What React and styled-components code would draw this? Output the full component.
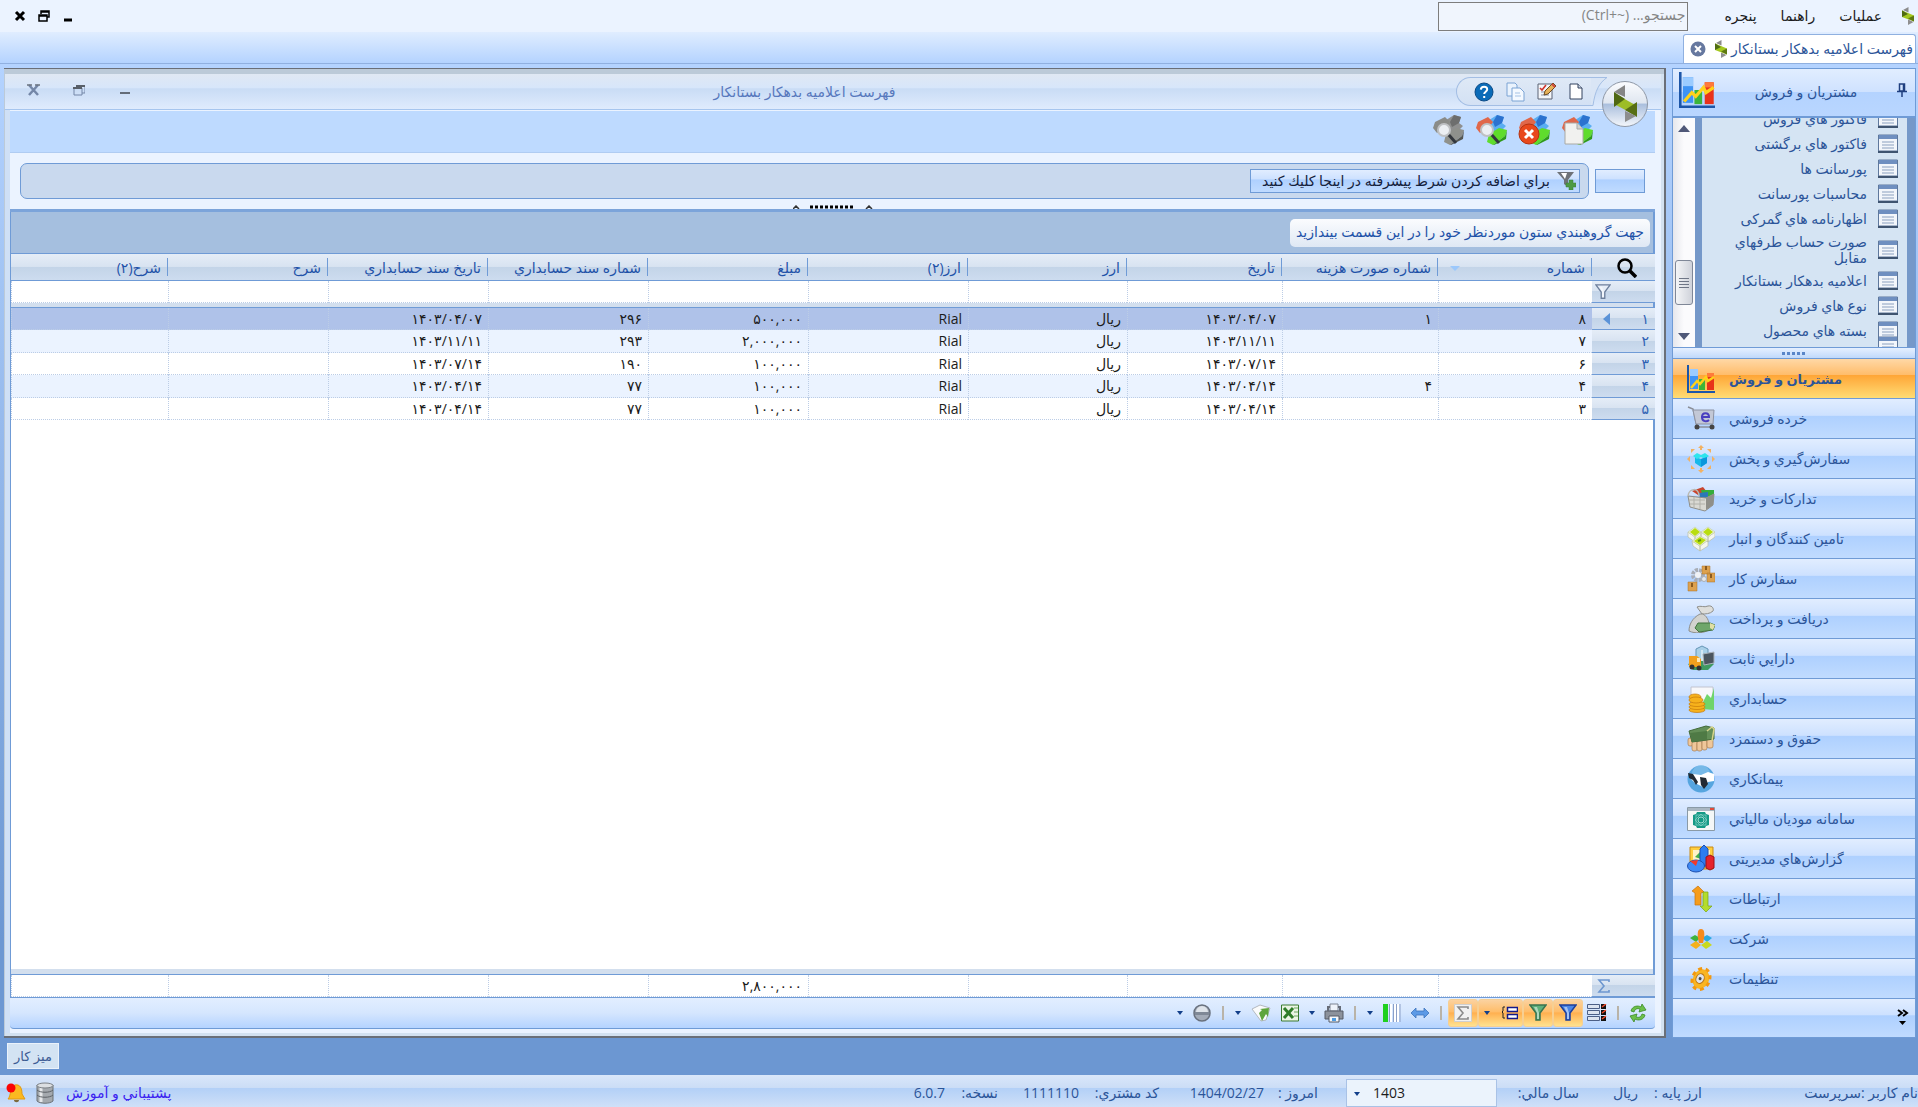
import React from "react";
import styled, { createGlobalStyle, css } from "styled-components";

const uiFont = `"Open Sans", "DejaVu Sans", sans-serif`;
const line = "#6f9bd6";
const ink = "#2c5599";

const glass = css`
  background: linear-gradient(#e1edff 0, #cde1ff 42%, #aed0ff 44%, #c0dbff 100%);
`;
const headerShade = css`
  background: linear-gradient(#e5edf7 0, #d8e3f1 48%, #c3d4e8 50%, #cddcef 100%);
`;
const dotted = "#bccde6";

const GlobalStyle = createGlobalStyle`
  * { box-sizing: border-box; }
  html, body, #root { height: 100%; }
  body { margin: 0; font: 14px/18px ${uiFont}; color: ${ink}; overflow: hidden; }
  button, input, select { font: inherit; color: inherit; margin: 0; padding: 0; border: 0; background: none; border-radius: 0; outline: 0; }
  button { cursor: pointer; white-space: nowrap; }
  svg { display: block; flex: none; }
  a { text-decoration: none; }
`;

/* ---------- shell ---------- */
const Shell = styled.div`
  display: flex;
  flex-direction: column;
  height: 100vh;
`;
const MenuBar = styled.header`
  display: flex;
  justify-content: space-between;
  height: 32px;
  background: #ebf3ff;
`;
const SystemButtons = styled.div`
  display: flex;
  align-items: center;
  padding-left: 8px;
`;
const SystemButton = styled.button`
  display: grid;
  place-items: center;
  width: 24px;
  height: 28px;
`;
const MenuSide = styled.nav`
  display: flex;
  direction: rtl;
  align-items: center;
  padding-right: 4px;
`;
const MenuItem = styled.button`
  margin-right: ${(p) => p.$gap || 24}px;
  color: #1c1c1c;
`;
const SearchBox = styled.input`
  && {
    width: 250px;
    height: 29px;
    margin-right: 36px;
    border: 1px solid #7d7d7d;
    background: #f0f5fd;
    padding: 0 2px 4px;
  }
  &::placeholder { color: #858585; opacity: 1; }
`;
const TabStrip = styled.div`
  display: flex;
  direction: rtl;
  align-items: flex-end;
  height: 32px;
  padding-right: 2px;
  border-bottom: 1px solid #90b0e0;
  background: linear-gradient(#e0edff, #b4d3ff);
`;
const Tab = styled.div`
  display: flex;
  align-items: center;
  gap: 4px;
  width: 233px;
  height: 29px;
  padding: 0 2px;
  border: 1px solid #8fb0e0;
  border-bottom: 0;
  border-radius: 3px 3px 0 0;
  background: #fff;
  white-space: nowrap;
`;
const TabClose = styled.button`
  && {
    margin-right: auto;
    padding: 0 4px;
  }
`;
const Workspace = styled.main`
  display: flex;
  flex: 1;
  min-height: 0;
  gap: 6px;
  padding: 4px 2px 0 4px;
  background: linear-gradient(#b4d3ff 0, #6c97d2 90%);
`;

/* ---------- document window ---------- */
const DocWindow = styled.section`
  position: relative;
  display: flex;
  flex: 1;
  flex-direction: column;
  min-width: 0;
  border: solid #6a6f78;
  border-width: 1px 2px 2px 0;
  background: #d3e1f0;
  padding: 5px 3px 3px 1px;
  box-shadow: inset 1px 5px 0 #bccad8;
`;
const TitleBar = styled.div`
  display: flex;
  height: 36px;
  flex: none;
  border-bottom: 1px solid #a6c5ee;
  background: linear-gradient(#e0e8f3 0, #d7e6fa 40%, #c9dcf5 42%, #dfebfd 100%);
`;
const WindowButtons = styled.div`
  display: flex;
  padding: 0 5px;
`;
const WindowButton = styled.button`
  display: grid;
  place-items: center;
  width: 46px;
  height: 32px;
`;
const WindowTitle = styled.h1`
  flex: 1;
  margin: 0;
  text-align: center;
  font: 400 14px/36px ${uiFont};
  color: #5778bd;
`;
const QuickTools = styled.div`
  display: flex;
  direction: rtl;
  align-items: center;
  align-self: flex-start;
  gap: 12px;
  height: 29px;
  margin: 3px 0 0;
  padding: 0 8px 0 17px;
  border: 1px solid #a3bee4;
  border-right: 0;
  border-radius: 15px 0 0 15px;
  background: linear-gradient(#dfe9f6, #d3e1f4);
`;
const QuickEnd = styled.svg`
  margin: 3px 54px 0 0;
`;
const Orb = styled.button`
  position: absolute;
  top: 11px;
  right: 15px;
`;
const WindowBody = styled.div`
  display: flex;
  flex: 1;
  flex-direction: column;
  min-height: 0;
  padding: 1px 6px 4px 5px;
  background: #ebf3ff;
  box-shadow: inset 5px 0 0 #cfe0f6;
`;
const ActionBar = styled.div`
  display: flex;
  direction: rtl;
  align-items: flex-start;
  gap: 11px;
  height: 42px;
  flex: none;
  padding: 3px 62px 0 0;
  border-bottom: 1px solid #b0ccf2;
  background: #bedaff;
`;
const ConditionRow = styled.div`
  display: flex;
  direction: rtl;
  gap: 6px;
  align-items: center;
  flex: none;
  height: 55px;
  padding: 0 10px;
`;
const BlankButton = styled.button`
  && { border: 1px solid ${line}; }
  width: 50px;
  height: 24px;
  ${glass}
`;
const ConditionBox = styled.div`
  display: flex;
  align-items: center;
  flex: 1;
  height: 36px;
  padding: 0 8px;
  border: 1px solid ${line};
  border-radius: 7px;
  background: #c9d9ee;
`;
const ConditionButton = styled.button`
  && {
    display: flex;
    align-items: center;
    gap: 6px;
    height: 24px;
    width: 330px;
    padding: 0 3px;
    border: 1px solid ${line};
    color: #14213c;
    ${glass}
  }
`;
const Splitter = styled.div`
  display: flex;
  justify-content: center;
  align-items: flex-end;
  flex: none;
  height: 4px;
  border-bottom: 3px solid #7ca4da;
`;

/* ---------- grid ---------- */
const GridFrame = styled.div`
  display: flex;
  flex: 1;
  flex-direction: column;
  min-height: 0;
  border: solid ${line};
  border-width: 0 2px 1px 1px;
  background: #fff;
`;
const GroupPanel = styled.div`
  display: flex;
  direction: rtl;
  align-items: center;
  flex: none;
  height: 42px;
  padding: 0 3px;
  border-bottom: 1px solid ${line};
  background: #a5bfdf;
`;
const GroupHint = styled.span`
  height: 28px;
  padding: 0 6px;
  border-radius: 5px;
  background: linear-gradient(#fbfcfe, #dfe8f4);
  line-height: 26px;
  white-space: nowrap;
  color: #1f52a8;
`;
const Table = styled.table`
  width: 100%;
  table-layout: fixed;
  border-collapse: separate;
  border-spacing: 0;
  direction: rtl;
`;
const HeadCell = styled.th`
  height: 27px;
  padding: 0;
  border-bottom: 1px solid ${line};
  ${headerShade}
  font-weight: 400;
  color: #1f52a8;
`;
const HeadLabel = styled.div`
  display: flex;
  align-items: center;
  justify-content: ${(p) => (p.$center ? "center" : "space-between")};
  height: 18px;
  padding: 2px 6px 0 12px;
  border-right: ${(p) => (p.$center ? 0 : 1)}px solid ${line};
  white-space: nowrap;
`;
const RowHead = styled.th`
  padding: 0 6px 0 0;
  border-bottom: 1px solid ${line};
  ${headerShade}
  font-weight: 400;
  color: #2f62b4;
`;
const RowHeadInner = styled.div`
  display: flex;
  align-items: center;
  justify-content: ${(p) => (p.$end ? "flex-end" : "space-between")};
  padding-left: ${(p) => (p.$end ? 3 : 11)}px;
`;
const Cell = styled.td`
  padding: 0 6px;
  overflow: hidden;
  border-left: 1px dotted ${dotted};
  border-bottom: 1px dotted ${dotted};
  text-align: right;
  white-space: nowrap;
  color: #1b1b1b;
`;
const DataRow = styled.tr`
  height: 22px;
  background: ${(p) => (p.$selected ? "#afc2e9" : "#fff")};
  &:nth-child(even) { height: 23px; background: #ebf3ff; }
`;
const FilterRow = styled.tr`
  height: 22px;
`;
const FilterInput = styled.input`
  display: block;
  width: 100%;
  height: 18px;
`;
const Divider = styled.div`
  flex: none;
  height: 5px;
  background: #d3dfee;
  border-bottom: 1px solid ${line};
`;
const EmptyArea = styled.div`
  flex: 1;
  border-bottom: 5px solid #d3dfee;
`;
const SummaryTable = styled(Table)`
  flex: none;
  border-top: 1px solid ${line};
`;
const GridTools = styled.div`
  display: flex;
  direction: rtl;
  align-items: center;
  flex: none;
  height: 31px;
  padding-right: 4px;
  border-bottom: 1px solid ${line};
  border-radius: 0 0 4px 4px;
  background: linear-gradient(#e2eeff 0, #d5e6fe 50%, #b4d3ff 100%);
`;
const Tool = styled.button`
  && {
    display: flex;
    align-items: center;
    justify-content: center;
    gap: 12px;
    width: ${(p) => p.$w || 28}px;
    height: 28px;
    ${(p) => p.$on && css`
      border: 1px solid #f6cf93;
      border-radius: 3px;
      background: linear-gradient(#fbd2a0 0, #ffbd69 45%, #ffb050 50%, #ffe28f 100%);
    `}
  }
`;
const ToolGap = styled.span`
  width: 14px;
  height: 14px;
  background: linear-gradient(90deg, transparent 6px, #b9b3a8 6px, #b9b3a8 8px, transparent 8px);
`;

/* ---------- sidebar ---------- */
const Sidebar = styled.aside`
  display: flex;
  flex: none;
  flex-direction: column;
  width: 244px;
  border: 1px solid ${line};
  background: #7598c9;
`;
const PaneHeader = styled.div`
  display: flex;
  align-items: flex-start;
  flex: none;
  height: 49px;
  padding: 3px 8px 0 6px;
  border-bottom: 2px solid ${line};
  background: linear-gradient(#e1edff 0, #cfe2ff 48%, #b4d3ff 50%, #b9d6ff 100%);
`;
const PaneTitle = styled.h2`
  flex: 1;
  margin: 0;
  text-align: center;
  font: 400 14px/40px ${uiFont};
`;
const PinButton = styled.button`
  height: 36px;
`;
const PaneBody = styled.div`
  display: flex;
  flex: 1;
  gap: 7px;
  min-height: 0;
  padding: 0 8px 0 0;
`;
const ScrollBar = styled.div`
  display: flex;
  flex-direction: column;
  align-items: center;
  justify-content: space-between;
  flex: none;
  width: 22px;
  padding: 7px 0;
  background: linear-gradient(90deg, #e6e7ec, #fbfbfd 50%);
`;
const Thumb = styled.div`
  display: flex;
  flex-direction: column;
  align-items: center;
  justify-content: center;
  gap: 2px;
  width: 18px;
  height: 45px;
  margin-top: 100px;
  border: 1px solid #7f8797;
  border-radius: 3px;
  background: linear-gradient(90deg, #f4f5f7, #cfd2da);
`;
const Grip = styled.i`
  width: 10px;
  height: 1px;
  background: #6f7686;
`;
const LinkPane = styled.ul`
  display: flex;
  flex: 1;
  flex-direction: column;
  justify-content: flex-end;
  direction: rtl;
  margin: 0;
  padding: 0 9px 0 0;
  overflow: hidden;
  list-style: none;
  background: #d5e4f3;
`;
const LinkRow = styled.li`
  flex: none;
  height: ${(p) => (p.$tall ? 37 : 25)}px;
  &:last-child { height: 4px; }
`;
const PaneLink = styled.a`
  display: flex;
  align-items: center;
  gap: 11px;
  height: 100%;
  color: ${ink};
  line-height: 16px;
  & > span { width: 146px; }
`;
const PaneSplit = styled.div`
  display: flex;
  align-items: center;
  justify-content: center;
  flex: none;
  height: 11px;
  border-top: 1px solid ${line};
  background: linear-gradient(#e6f0ff, #c0d9fb);
`;
const NavButton = styled.button`
  && {
    display: flex;
    align-items: center;
    gap: 14px;
    flex: none;
    height: 40px;
    padding: 0 14px;
    border-top: 1px solid ${line};
    ${glass}
    ${(p) => p.$active && css`
      font-weight: 700;
      font-size: 13px;
      background: linear-gradient(#ffd8a6 0, #ffbd6c 40%, #ffa637 42%, #ffdc74 100%);
    `}
  }
`;
const NavOverflow = styled.div`
  display: flex;
  justify-content: flex-end;
  align-items: center;
  flex: none;
  height: 39px;
  padding: 0 6px;
  border-top: 1px solid ${line};
  ${glass}
`;

/* ---------- bottom ---------- */
const DeskBar = styled.div`
  flex: none;
  height: 37px;
  padding: 5px 7px;
  background: #6c97d2;
`;
const DeskButton = styled.button`
  && {
    width: 52px;
    height: 26px;
    border: 1px solid #eaf2fb;
    background: #d3e3f3;
    color: #3c5c93;
    font-size: 13px;
  }
`;
const StatusBar = styled.footer`
  display: flex;
  direction: rtl;
  align-items: center;
  flex: none;
  height: 32px;
  padding-top: 4px;
  background: linear-gradient(#dae7fa 0, #cbddf6 40%, #b3d0f7 42%, #cfe0f8 100%);
  white-space: nowrap;
`;
const Field = styled.span`
  flex: 0 0 ${(p) => p.$w}px;
`;
const YearBox = styled.span`
  position: relative;
  width: 151px;
  margin-left: 28px;
  & > svg { position: absolute; left: 8px; top: 13px; }
`;
const YearSelect = styled.select`
  && {
    display: block;
    width: 100%;
    height: 28px;
    padding-left: 26px;
    border: 1px solid #a9c2e6;
    background: #ebf3fc;
    direction: ltr;
    appearance: none;
    color: #1b1b1b;
  }
`;
const SupportArea = styled.div`
  display: flex;
  align-items: center;
  gap: 10px;
  margin-right: auto;
  padding-left: 6px;
`;
const SupportLink = styled.a`
  margin-left: 2px;
  color: #3a22f0;
`;

/* ---------- icons ---------- */
const Caret = ({ c = "#123f8a" }) => (
  <svg width="6" height="4"><path d="M0 0h6L3 4z" fill={c} /></svg>
);
const Logo = ({ s = 12 }) => (
  <svg width={s} height={s * 1.5} viewBox="0 0 24 36">
    <path d="M2 6 13 0v11z" fill="#8b8b8b" />
    <path d="M0 7v13l13-6z" fill="#4f6b12" />
    <path d="M0 7 24 17v12L0 20z" fill="#a4c81f" />
    <path d="M0 7v13l12-6z" fill="#4f6b12" />
    <path d="M24 17v12l-12-6z" fill="#5d7812" />
    <path d="M12 25v11l11-6z" fill="#8f8f8f" />
  </svg>
);
const OrbIcon = () => (
  <svg width="48" height="48" viewBox="0 0 48 48">
    <defs>
      <linearGradient id="orb" x1="0" y1="0" x2="0" y2="1">
        <stop offset="0" stopColor="#fbfcfe" /><stop offset=".48" stopColor="#dfe6f0" />
        <stop offset=".5" stopColor="#a9bedd" /><stop offset="1" stopColor="#f4f7fb" />
      </linearGradient>
    </defs>
    <circle cx="24" cy="24" r="22.5" fill="url(#orb)" stroke="#8f98a6" />
    <path d="M13 12 24 5v12z" fill="#858585" />
    <path d="M13 13 36 26v10L13 24z" fill="#9dbd26" />
    <path d="M13 12v15l11-8z" fill="#4f6812" />
    <path d="M36 22v15l-12-7z" fill="#586f14" />
    <path d="M24 31v11l11-6z" fill="#8d8d8d" />
  </svg>
);
const PageIcon = () => (
  <svg width="14" height="18"><path d="M1 1h8l4 4v11H1z" fill="#fff" stroke="#33425e" /><path d="M9 1v4h4" fill="#cdd6e4" stroke="#33425e" /></svg>
);
const EditIcon = () => (
  <svg width="20" height="19"><path d="M1 2h14v15H1z" fill="#f4f6fa" stroke="#5a6275" /><path d="M4 10h8M4 13h8" stroke="#8993a8" /><path d="m3 6 2 2 4-5" fill="none" stroke="#d0342c" strokeWidth="1.6" /><path d="m7 13 1-4 8-8 3 3-8 8z" fill="#e7b25a" stroke="#6b4a22" /><path d="m15 2 3 3" stroke="#d04a3e" strokeWidth="2" /></svg>
);
const CopyIcon = () => (
  <svg width="19" height="20"><path d="M1 1h8l2 2v11H1z" fill="#eaf3fd" stroke="#7ba3d4" /><path d="M6 6h8l4 4v9H6z" fill="#f4f9ff" stroke="#7ba3d4" /><path d="M9 11h5M9 14h6" stroke="#a5c2e4" /></svg>
);
const HelpIcon = () => (
  <svg width="20" height="20"><circle cx="10" cy="10" r="9" fill="#0a6bb8" stroke="#0a4a86" /><path d="M6.800 7.600c.2-4 6.600-3.800 6.400-.2-.1 2.400-3 2.200-3 4.600M10.200 14v2" fill="none" stroke="#fff" strokeWidth="2" /></svg>
);
const Blocks = ({ gray, kind }) => {
  const c = gray ? ["#8f9090", "#6d6e6e", "#8a8b88", "#8f918c", "#565752"] : ["#5aaef2", "#2c72cf", "#e0674a", "#5fdc2c", "#2f9a18"];
  return (
    <svg width="32" height="32" viewBox="0 0 32 32">
      <path d="M11 8 22 1l7 2-2 6 4 3-6 6H15z" fill={c[0]} />
      <path d="M22 1l7 2-2 6-7 4-2-5z" fill={c[1]} />
      <path d="M1 14 3 8l10-5 5 5-5 7-8 4z" fill={c[2]} />
      <path d="m14 20 10-6 8 2-2 6-12 9-6-3z" fill={c[3]} />
      <path d="m18 31 12-9 2-6-1 9-12 6z" fill={c[4]} />
      {kind === "new" && <path d="M4 9h12l6 6v15H4z" fill="#f1f1ef" stroke="#a9a9a4" />}
      {kind === "new" && <path d="M16 9v6h6" fill="#d5d5d2" stroke="#a9a9a4" />}
      {kind === "delete" && <g><circle cx="11" cy="20" r="10" fill="#e8481c" stroke="#b53210" /><path d="m7 16 8 8m0-8-8 8" stroke="#fff" strokeWidth="3" /></g>}
      {kind === "view" && <g><path d="m16 20 8 9" stroke="#33373d" strokeWidth="3" /><circle cx="12" cy="16" r="6" fill="#eceff3" stroke="#bfc1c4" strokeWidth="2" /></g>}
    </svg>
  );
};
const Funnel = ({ a = "#4b5566", b = "#e8ebf0", s = 18 }) => (
  <svg width={s} height={s} viewBox="0 0 18 18"><path d="M1 1h16l-6 8v7H7V9z" fill={b} stroke={a} strokeWidth="1.5" /><path d="M5 3h3l2 6v6H8V9z" fill="#fff" opacity=".5" /></svg>
);
const FunnelAdd = () => (
  <svg width="20" height="19" viewBox="0 0 20 19"><path d="M1 1h17l-6 8v7l-4-3V9z" fill="#6e7278" /><path d="M5 2h6l-2 6z" fill="#fff" /><path d="M13 9h4v3h3v4h-3v3h-4v-3h-3v-4h3z" fill="#4d9a45" stroke="#3a7d34" strokeWidth=".5" /></svg>
);
const ListIcon = () => (
  <svg width="20" height="19"><path d="M.5 1h19v16H.5z" fill="#f3f6fb" stroke="#5f789c" /><path d="M1 1h18v4H1z" fill="#6f8fc0" /><path d="M4 8h12M4 11h12M4 14h12" stroke="#8ba0bf" /><path d="M0 18h20" stroke="#3f5470" strokeWidth="2" /></svg>
);
const Search = () => (
  <svg width="20" height="20" viewBox="0 0 20 20"><circle cx="8" cy="8" r="6.500" fill="none" stroke="#000" strokeWidth="2.500" /><path d="m13 13 6 6" stroke="#000" strokeWidth="3.500" /></svg>
);
const Frame = ({ children }) => <svg width="28" height="28" viewBox="0 0 28 28">{children}</svg>;
const ChartIcon = ({ s = 28 }) => (
  <svg width={s} height={s} viewBox="0 0 28 28">
    <path d="M3 4h8v20H3z" fill="#3f93f4" /><path d="M3 4h8v7H3z" fill="#9bcbff" />
    <path d="M12 14h6v11h-6z" fill="#3cb53a" /><path d="M20 8h7v17h-7z" fill="#e8321a" /><path d="M20 8h7v4h-7z" fill="#ff7a3a" />
    <path d="M1 0v27h27" fill="none" stroke="#1d56a8" strokeWidth="2" />
    <path d="m4 23 6-7 3 3 6-7 2 4 6-4" fill="none" stroke="#ffd21a" strokeWidth="2.500" />
  </svg>
);
const CartIcon = () => <Frame><path d="M1 2l5 2 4 18h16" fill="none" stroke="#8b8f98" strokeWidth="1.500" /><path d="M6 5h21l-1 14H9z" fill="#c3c8d6" stroke="#8d93a3" /><path d="M14 12h8c0-5-7-5-7 0s5 5 7 3" fill="none" stroke="#4a3fc0" strokeWidth="2" /><circle cx="10" cy="22" r="2.500" fill="#444" /><circle cx="25" cy="22" r="2.500" fill="#444" /></Frame>;
const SpreadIcon = () => <Frame><g fill="#f2b263"><path d="M14 0l3 3h-6zM13 3h2v2h-2zM14 28l3-3h-6zM13 23h2v2h-2zM0 14l3-3v6zM28 14l-3-3v6zM4 4h4L4 8zM24 4v4l-4-4zM4 24v-4l4 4zM24 24h-4l4-4z" /></g><path d="m8 12 6 2 6-2v6l-6 4-6-4z" fill="#16b8ea" /><path d="m6 11 4-3 4 2 4-2 4 3-4 3-4-2-4 2z" fill="#2fe4ee" /><path d="M14 14v8l6-4v-6z" fill="#0a97dd" /></Frame>;
const BasketIcon = () => <Frame><path d="M5 6 16 2l4 5-9 3z" fill="#c8452e" /><path d="M14 5h13v7l-11 1z" fill="#35ad3b" /><path d="m12 8 9-1v5l-8 2z" fill="#2b77b8" /><path d="M1 11l18 2 8-4-1 11-8 6L3 22z" fill="#d9d9d3" stroke="#8e8e88" /><path d="M19 13v12l7-5 1-11z" fill="#8f8f89" /><path d="M2 15h16M3 19h15M7 12v11M13 13v11" stroke="#b1b1aa" /><path d="M1 11C2 3 12 2 12 11" fill="none" stroke="#b9b9b3" strokeWidth="1.500" /></Frame>;
const PalletIcon = () => <Frame><path d="m1 7 7 5v5l-7-5zM14 7l-6 5v5l6-5zM14 7l7 5v5l-7-5zM28 7l-7 5v5l7-5zM5 16l8 5v5l-7-5zM21 15l-8 6v5l8-5z" fill="#f4f5ee" stroke="#b7bda8" strokeWidth=".7" /><path d="m1 7 7-5 6 5-6 5zM14 7l7-5 7 5-7 5zM5 16l8-5 8 4-8 6z" fill="#eff4da" stroke="#c5ceaa" strokeWidth=".7" /><path d="m3 7 5-4 5 4-5 4zM16 7l5-4 5 4-5 4zM7 16l6-4 6 3-6 5z" fill="#b9dd10" /><path d="m11 16 3-1" stroke="#5f9410" strokeWidth="2" /></Frame>;
const GearBoxesIcon = () => <Frame><circle cx="11" cy="10" r="5" fill="none" stroke="#a9adb5" strokeWidth="4" strokeDasharray="3 1" /><circle cx="11" cy="10" r="3" fill="#f0f2f5" /><path d="M15 1h8v8h-8zM20 8h8v9h-8zM1 17h9v9H1z" fill="#dda14e" stroke="#a8732b" strokeWidth=".5" /><path d="M18 1h2v4h-2zM23 9h2v4h-2zM4 18h2v4H4z" fill="#8a5a1f" /><circle cx="17" cy="14" r="2.500" fill="#e5e8ec" stroke="#a9adb5" /></Frame>;
const MoneyBagIcon = () => <Frame><path d="M10 2c4-2 7 1 11-1 5-1 6 4 5 5-3 3-8 3-11 3z" fill="#dededb" stroke="#8e8e8a" /><path d="M13 9C5 13 2 20 2 26c6 3 15 2 20-1 1-7-1-13-6-16z" fill="#d2d2ce" stroke="#8e8e8a" /><path d="M11 18l12 0 5 2-2 5-14 2-4-4z" fill="#6fa66a" stroke="#43733f" /><path d="m23 18 5 2-2 5-3-2z" fill="#e0dfa4" /></Frame>;
const AssetsIcon = () => <Frame><path d="m9 4 6-3 6 3v16H9z" fill="#a9d0e8" stroke="#6595b5" /><path d="M15 5v15" stroke="#fff" /><path d="M1 19c8-4 20-4 26 0l-6 6H6z" fill="#3f9a61" /><path d="M2 11h8l4 3v8H2z" fill="#f2a01e" /><path d="M10 13h3v4h-3z" fill="#fde7b4" /><circle cx="5" cy="22" r="2.500" fill="#333" /><circle cx="12" cy="23" r="2.500" fill="#333" /><path d="m16 9 11-2v11l-10 2z" fill="#4b555f" stroke="#aab2ba" /></Frame>;
const AccountingIcon = () => <Frame><path d="M4 2h22v19H4z" fill="#f7f7fa" stroke="#c2c4cf" /><path d="M14 21 20 9l4 4 3-10v22l-11-1z" fill="#6fd46a" /><g fill="#f7b21c" stroke="#c47a0a" strokeWidth=".7"><ellipse cx="8" cy="12" rx="6" ry="3" /><ellipse cx="10" cy="25" rx="8" ry="2.500" /><ellipse cx="10" cy="22" rx="8" ry="2.500" /><ellipse cx="10" cy="19" rx="8" ry="2.500" /><ellipse cx="9" cy="15" rx="7" ry="3" /></g></Frame>;
const PayrollIcon = () => <Frame><g fill="#efc79a" stroke="#a97d4e" strokeWidth=".7"><rect x="1" y="13" width="5" height="8" rx="2" /><rect x="5" y="15" width="5" height="11" rx="2" /><rect x="10" y="16" width="5" height="10" rx="2" /><rect x="15" y="15" width="5" height="10" rx="2" /><rect x="20" y="12" width="6" height="11" rx="2" /></g><path d="M2 6 19 1l8 2v11L5 17z" fill="#648f58" stroke="#436b39" /><path d="m3 8 17-2v9L5 17z" fill="#4f7a45" /><path d="m20 6 5-4 2 2-2 12" fill="none" stroke="#d7d489" strokeWidth="1.500" /></Frame>;
const HandshakeIcon = () => <Frame><circle cx="14" cy="14" r="13.500" fill="#56a5df" /><circle cx="14" cy="9" r="9" fill="#8cc7ef" opacity=".6" /><path d="m6 9 8 1 7-3 6 2v7l-6 1-5 5-8-4-4-4z" fill="#fff" /><path d="m1 8 5 1 5 8-2 3-3-5-4-2zM13 12l6 1 2 6-4 5-3-4z" fill="#222b33" /></Frame>;
const TaxIcon = () => <Frame><path d="M.5 2.500h27v23H.5z" fill="#f4f7f7" stroke="#8a9aa6" /><path d="M1 3h26v3H1z" fill="#aab7c2" /><path d="M23 3h4v2h-4z" fill="#e04a3a" /><path d="M10 7h8l1 2 3 1v10l-3 1-1 2h-8l-1-2-3-1V10l3-1z" fill="#149a86" /><path d="M9 10h10v10H9zM14 9l6 6-6 6-6-6z" fill="none" stroke="#7fcfc2" strokeWidth=".8" /><circle cx="14" cy="15" r="3" fill="#149a86" stroke="#bfe8e0" strokeWidth=".8" /></Frame>;
const ReportIcon = () => <Frame><path d="M3 2h23v22H3z" fill="#ffcf3f" stroke="#c98a14" /><path d="M6 5h17v16H6z" fill="#fff3c6" /><path d="m8 12 6-6v8z" fill="#44b04a" /><path d="m13 4 4-4 4 4v17h-8z" fill="#2d7df0" stroke="#1a4fb5" /><path d="m19 12 4-2 4 2v11l-4 2-4-2z" fill="#e5232b" stroke="#9e1118" /><ellipse cx="9" cy="21" rx="8.500" ry="6" fill="#3e8af5" stroke="#1c4fb0" /><path d="M9 21 3 16l8-1z" fill="#f23a2a" /></Frame>;
const LinksIcon = () => <Frame><path d="M5 6l6-5 6 6-3 1v12H8V8z" fill="#f59c1c" stroke="#c8720a" strokeWidth=".7" /><path d="M16 7h5v14h4l-6 6-6-6h3z" fill="#b4dc2c" stroke="#7aa514" strokeWidth=".7" /></Frame>;
const CompanyIcon = () => <Frame><path d="m3 13 5-3 5 3-4 4z" fill="#3eb33c" /><path d="m15 13 5-3 5 3-5 4z" fill="#2aa9e0" /><path d="m3 20 6-4 5 4-5 4z" fill="#f5b01c" /><path d="m14 20 6-4 5 4-6 4z" fill="#c9d91e" /><path d="M14 4c4 0 4 6 2 14h-4C10 10 10 4 14 4z" fill="#f58a1c" /></Frame>;
const SettingsIcon = () => <Frame><g transform="rotate(25 14 14)"><ellipse cx="14" cy="14" rx="8" ry="10" fill="#f9b521" /><ellipse cx="14" cy="14" rx="8.500" ry="11" fill="none" stroke="#f3980f" strokeWidth="3" strokeDasharray="4 3.650" /><ellipse cx="13" cy="14" rx="4" ry="5" fill="#dfe3e8" stroke="#b9761a" /><circle cx="13" cy="14" r="1.500" fill="#444" /></g></Frame>;
const PinIcon = () => <svg width="10" height="14"><path d="M2.500 1h5v7h-5zM0 8.500h10M5 9v5M6.500 1v7" fill="none" stroke="#1f3f7f" strokeWidth="1.500" /></svg>;
const Refresh = () => <svg width="20" height="20" viewBox="0 0 20 20"><path d="M3 8c1-5 7-6 10-4l1-3 4 6-7 2 1-3C9 5 7 6 6 9z" fill="#6cc04a" stroke="#3c8a27" strokeWidth=".8" /><path d="M17 12c-1 5-7 6-10 4l-1 3-4-6 7-2-1 3c3 1 5 0 6-3z" fill="#6cc04a" stroke="#3c8a27" strokeWidth=".8" /></svg>;
const Chooser = () => <svg width="20" height="18"><g fill="#dce4f0" stroke="#4c5f86"><path d="M.5.5h12v4H.5zM.5 6.500h12v4H.5zM.5 12.500h12v4H.5z" /></g><path d="M14 0h5v5h-5zM14 6h5v5h-5zM14 12h5v5h-5z" fill="#111" /><path d="m15 3 4-3M15 9l4-3M15 15l4-3" stroke="#f04a2a" strokeWidth="1.500" /></svg>;
const GroupIcon = () => <svg width="16" height="14"><path d="M3 1H1v4L0 6l1 1v5h2" fill="none" stroke="#222" /><path d="M5.500 1.500h10v4h-10zM5.500 8.500h10v4h-10z" fill="#fff" stroke="#141a8a" strokeWidth="1.500" /></svg>;
const Sigma = ({ box }) => <svg width="18" height="18" viewBox="0 0 18 18">{box && <path d="M.5.500h17v17H.5z" fill="#f1f1f1" stroke="#cfcfcf" />}<path d="M14 5V3H4l5 6-5 6h10v-2" fill="none" stroke={box ? "#8a8a8a" : "#6d97cf"} strokeWidth="1.600" /></svg>;
const FitIcon = () => <svg width="18" height="12"><path d="m0 6 5-5v3h8V1l5 5-5 5V8H5v3z" fill="#5d9ae6" stroke="#3c74bd" strokeWidth=".8" /></svg>;
const ColsIcon = () => <svg width="18" height="18"><path d="M0 0h5v18H0z" fill="#1fd01f" /><path d="M7 0h2v18H7zM11 0h2v18h-2zM14 0h2v18h-2z" fill="#fff" /><path d="M6.500 0v18M10.500 0v18M13.500 0v18M17 0v18" stroke="#8ba0c8" /></svg>;
const Printer = () => <svg width="20" height="20"><path d="M6 1h8v7H6z" fill="#eef3fa" stroke="#7c8492" /><path d="M1 8h18v8H1z" fill="#8c929c" stroke="#555b66" /><path d="M6 4H4v4M14 4h2v4" fill="none" stroke="#666c78" strokeWidth="2" /><path d="M5 13h10v6H5z" fill="#f5f7fa" stroke="#555b66" /><path d="M8 15h4v3H8z" fill="#4d9be2" /></svg>;
const Excel = () => <svg width="18" height="18"><path d="M.5 1h17v16H.5z" fill="#eaf4e4" stroke="#3a7a30" /><path d="m3 4 9 10M12 4 3 14" stroke="#2f7d28" strokeWidth="3" /><path d="M13 4h4M13 8h4M13 12h4" stroke="#6ca761" /></svg>;
const Export = () => <svg width="20" height="18"><path d="m1 5 8-4 10 3-4 12-5 1z" fill="#fafbfb" stroke="#b3b8bf" /><path d="m8 9 3-3-2-1 9-1-1 9-2-3-4 7z" fill="#5fa53c" /></svg>;
const GrayOrb = () => <svg width="18" height="18"><circle cx="9" cy="9" r="8" fill="#a3abb8" stroke="#69717e" strokeWidth="1.500" /><path d="M3 8a6 6 0 0 1 12 0z" fill="#dfe4ea" /><path d="M2 8h14v3H2z" fill="#7f8896" /></svg>;
const Database = () => <svg width="18" height="22"><path d="M1 3v16c3 3 13 3 16 0V3z" fill="#a4a9ae" stroke="#6d7277" /><path d="M5 4v16" stroke="#e6e8ea" strokeWidth="3" /><path d="M1 8c3 3 13 3 16 0M1 13c3 3 13 3 16 0" fill="none" stroke="#5e6368" /><ellipse cx="9" cy="3.500" rx="8" ry="2.500" fill="#dcdfe2" stroke="#7d8287" /></svg>;
const Bell = () => <svg width="20" height="20"><path d="M9 2c5-1 7 3 7 9l3 5H2c3-3 2-12 7-14z" fill="#fbb920" stroke="#e39a10" /><path d="M8 17h5c0 3-5 3-5 0z" fill="#7c6a3c" /><circle cx="5" cy="5" r="4.500" fill="#fb0505" /></svg>;
const CloseDot = () => <svg width="16" height="16"><circle cx="8" cy="8" r="7.500" fill="#66789f" /><path d="m5 5 6 6m0-6-6 6" stroke="#fff" strokeWidth="2" /></svg>;

/* ---------- data ---------- */
const columns = [
  ["شماره", 154], ["شماره صورت هزینه", 156], ["تاریخ", 155], ["ارز", 159], ["ارز(۲)", 160],
  ["مبلغ", 160], ["شماره سند حسابداري", 160], ["تاریخ سند حسابداري", 160], ["شرح", 160], ["شرح(۲)", 157],
];
const rows = [
  ["۸", "۱", "۱۴۰۳/۰۴/۰۷", "ریال", "Rial", "۵۰۰,۰۰۰", "۲۹۶", "۱۴۰۳/۰۴/۰۷", "", ""],
  ["۷", "", "۱۴۰۳/۱۱/۱۱", "ریال", "Rial", "۲,۰۰۰,۰۰۰", "۲۹۳", "۱۴۰۳/۱۱/۱۱", "", ""],
  ["۶", "", "۱۴۰۳/۰۷/۱۴", "ریال", "Rial", "۱۰۰,۰۰۰", "۱۹۰", "۱۴۰۳/۰۷/۱۴", "", ""],
  ["۴", "۴", "۱۴۰۳/۰۴/۱۴", "ریال", "Rial", "۱۰۰,۰۰۰", "۷۷", "۱۴۰۳/۰۴/۱۴", "", ""],
  ["۳", "", "۱۴۰۳/۰۴/۱۴", "ریال", "Rial", "۱۰۰,۰۰۰", "۷۷", "۱۴۰۳/۰۴/۱۴", "", ""],
];
const persianIndex = ["۱", "۲", "۳", "۴", "۵"];
const paneLinks = [
  "فاکتور هاي فروش", "فاکتور هاي برگشتی", "پورسانت ها", "محاسبات پورسانت", "اظهارنامه هاي گمرکی",
  "صورت حساب طرفهاي مقابل", "اعلامیه بدهکار بستانکار", "نوع هاي فروش", "بسته هاي محصول", "",
];
const modules = [
  ["مشتریان و فروش", ChartIcon], ["خرده فروشي", CartIcon], ["سفارش‌گیري و پخش", SpreadIcon],
  ["تدارکات و خرید", BasketIcon], ["تامین کنندگان و انبار", PalletIcon], ["سفارش کار", GearBoxesIcon],
  ["دریافت و پرداخت", MoneyBagIcon], ["دارایي ثابت", AssetsIcon], ["حسابداري", AccountingIcon],
  ["حقوق و دستمزد", PayrollIcon], ["پیمانکاري", HandshakeIcon], ["سامانه مودیان مالیاتي", TaxIcon],
  ["گزارش‌هاي مدیریتی", ReportIcon], ["ارتباطات", LinksIcon], ["شرکت", CompanyIcon], ["تنظیمات", SettingsIcon],
];

const Columns = () => (
  <colgroup>
    <col style={{ width: 63 }} />
    {columns.map(([name, w]) => <col key={name} style={{ width: w }} />)}
  </colgroup>
);

const DataGrid = () => (
  <GridFrame>
    <GroupPanel><GroupHint>جهت گروهبندي ستون موردنظر خود را در این قسمت بیندازید</GroupHint></GroupPanel>
    <Table>
      <Columns />
      <thead>
        <tr>
          <HeadCell aria-label="جستجو"><HeadLabel $center><Search /></HeadLabel></HeadCell>
          {columns.map(([name], i) => (
            <HeadCell key={name} scope="col">
              <HeadLabel>{name}{i === 0 && <svg width="10" height="5"><path d="M0 0h10L5 5z" fill="#9cc8fb" /></svg>}</HeadLabel>
            </HeadCell>
          ))}
        </tr>
        <FilterRow>
          <RowHead aria-label="فیلتر"><RowHeadInner $end><Funnel a="#6d7f9c" b="#e6edf7" s={16} /></RowHeadInner></RowHead>
          {columns.map(([name]) => <Cell key={name}><FilterInput aria-label={name} /></Cell>)}
        </FilterRow>
      </thead>
    </Table>
    <Divider />
    <Table>
      <Columns />
      <tbody>
        {rows.map((r, i) => (
          <DataRow key={i} $selected={i === 0}>
            <RowHead scope="row">
              <RowHeadInner>{persianIndex[i]}{i === 0 && <svg width="7" height="12"><path d="M7 0v12L0 6z" fill="#5b93d8" /></svg>}</RowHeadInner>
            </RowHead>
            {r.map((v, j) => <Cell key={j}>{v}</Cell>)}
          </DataRow>
        ))}
      </tbody>
    </Table>
    <EmptyArea />
    <SummaryTable>
      <Columns />
      <tbody>
        <FilterRow>
          <RowHead aria-label="جمع"><RowHeadInner $end><Sigma /></RowHeadInner></RowHead>
          {columns.map(([name], i) => <Cell key={name}>{i === 5 ? "۲,۸۰۰,۰۰۰" : ""}</Cell>)}
        </FilterRow>
      </tbody>
    </SummaryTable>
  </GridFrame>
);

const GridToolbar = () => (
  <GridTools>
    <Tool $w={26} aria-label="بازخواني"><Refresh /></Tool>
    <ToolGap />
    <Tool aria-label="ستون‌ها"><Chooser /></Tool>
    <Tool $w={30} $on aria-label="فیلتر"><Funnel a="#1d3f9c" b="#4b86e6" /></Tool>
    <Tool $w={30} $on aria-label="فیلتر سریع"><Funnel a="#3a7350" b="#5fb07c" /></Tool>
    <Tool $w={45} $on aria-label="گروه‌بندي"><GroupIcon /><Caret /></Tool>
    <Tool $w={30} $on aria-label="جمع"><Sigma box /></Tool>
    <ToolGap />
    <Tool aria-label="اندازه ستون"><FitIcon /></Tool>
    <Tool aria-label="چیدمان"><ColsIcon /></Tool>
    <Tool $w={16} aria-label="گزینه‌هاي چیدمان"><Caret /></Tool>
    <ToolGap />
    <Tool aria-label="چاپ"><Printer /></Tool>
    <Tool $w={16} aria-label="گزینه‌هاي چاپ"><Caret /></Tool>
    <Tool aria-label="اکسل"><Excel /></Tool>
    <Tool $w={30} aria-label="ارسال"><Export /></Tool>
    <Tool $w={16} aria-label="گزینه‌هاي ارسال"><Caret /></Tool>
    <ToolGap />
    <Tool aria-label="نما"><GrayOrb /></Tool>
    <Tool $w={16} aria-label="گزینه‌هاي نما"><Caret /></Tool>
  </GridTools>
);

export default function App() {
  return (
    <Shell>
      <GlobalStyle />
      <MenuBar>
        <SystemButtons>
          <SystemButton aria-label="بستن"><svg width="12" height="12"><path d="m2 2 8 8m0-8-8 8" stroke="#000" strokeWidth="3" /></svg></SystemButton>
          <SystemButton aria-label="بازگرداندن"><svg width="12" height="12"><path d="M3 4V1h8v6H9M3 2h8M1 5h8v6H1zM1 6h8" fill="none" stroke="#000" strokeWidth="1.500" /></svg></SystemButton>
          <SystemButton aria-label="کمینه"><svg width="8" height="12"><path d="M0 10h8" stroke="#000" strokeWidth="3" /></svg></SystemButton>
        </SystemButtons>
        <MenuSide>
          <Logo />
          <MenuItem $gap={20}>عملیات</MenuItem>
          <MenuItem>راهنما</MenuItem>
          <MenuItem>پنجره</MenuItem>
          <SearchBox aria-label="جستجو" placeholder={"جستجو... \u200E(Ctrl+~)\u200E"} />
        </MenuSide>
      </MenuBar>
      <TabStrip>
        <Tab>
          <span>فهرست اعلامیه بدهکار بستانکار</span>
          <Logo />
          <TabClose aria-label="بستن زبانه"><CloseDot /></TabClose>
        </Tab>
      </TabStrip>
      <Workspace>
        <DocWindow>
          <TitleBar>
            <WindowButtons>
              <WindowButton aria-label="بستن پنجره"><svg width="13" height="12"><path d="m2 1 9 10m0-10L2 11" stroke="#7487a8" strokeWidth="2.500" /><path d="M0 1h5M8 1h5" stroke="#6b7480" strokeWidth="1.500" /></svg></WindowButton>
              <WindowButton aria-label="بازگرداندن پنجره"><svg width="12" height="11"><path d="M3 1h9v7H9M1 3h8v7H1z" fill="none" stroke="#7487a8" /><path d="M3 1h9M0 3h9" stroke="#596069" strokeWidth="2" /></svg></WindowButton>
              <WindowButton aria-label="کمینه کردن پنجره"><svg width="10" height="8"><path d="M0 7h10" stroke="#646c78" strokeWidth="2" /></svg></WindowButton>
            </WindowButtons>
            <WindowTitle>فهرست اعلامیه بدهکار بستانکار</WindowTitle>
            <QuickTools>
              <button aria-label="جدید"><PageIcon /></button>
              <button aria-label="ویرایش"><EditIcon /></button>
              <button aria-label="رونوشت"><CopyIcon /></button>
              <button aria-label="راهنما"><HelpIcon /></button>
            </QuickTools>
            <QuickEnd width="16" height="29"><path d="M0 .5H16C8 6 4 14 2 28.500H0z" fill="#d9e5f5" /><path d="M0 .5H16C8 6 4 14 2 28.500H0" fill="none" stroke="#a3bee4" /></QuickEnd>
          </TitleBar>
          <Orb aria-label="منوي برنامه"><OrbIcon /></Orb>
          <WindowBody>
            <ActionBar>
              <button aria-label="جدید"><Blocks kind="new" /></button>
              <button aria-label="حذف"><Blocks kind="delete" /></button>
              <button aria-label="مشاهده"><Blocks kind="view" /></button>
              <button aria-label="پیش‌نمایش"><Blocks kind="view" gray /></button>
            </ActionBar>
            <ConditionRow>
              <BlankButton aria-label="شرط" />
              <ConditionBox>
                <ConditionButton><FunnelAdd />براي اضافه کردن شرط پیشرفته در اینجا کلیك کنید</ConditionButton>
              </ConditionBox>
            </ConditionRow>
            <Splitter>
              <svg width="80" height="4"><path d="m0 4 3-3 3 3M73 4l3-3 3 3" fill="none" stroke="#333" strokeWidth="1.500" /><path d="M17 2h44" stroke="#000" strokeWidth="3" strokeDasharray="3 2" /></svg>
            </Splitter>
            <DataGrid />
            <GridToolbar />
          </WindowBody>
        </DocWindow>
        <Sidebar>
          <PaneHeader>
            <ChartIcon s={36} />
            <PaneTitle>مشتریان و فروش</PaneTitle>
            <PinButton aria-label="سنجاق"><PinIcon /></PinButton>
          </PaneHeader>
          <PaneBody>
            <ScrollBar>
              <svg width="12" height="7"><path d="M0 7h12L6 0z" fill="#4f5878" /></svg>
              <Thumb><Grip /><Grip /><Grip /><Grip /></Thumb>
              <svg width="12" height="7"><path d="M0 0h12L6 7z" fill="#4f5878" /></svg>
            </ScrollBar>
            <LinkPane>
              {paneLinks.map((t, i) => (
                <LinkRow key={i} $tall={i === 5}>
                  <PaneLink href="#" aria-label={t || "بیشتر"}><ListIcon /><span>{t}</span></PaneLink>
                </LinkRow>
              ))}
            </LinkPane>
          </PaneBody>
          <PaneSplit><svg width="24" height="3"><path d="M0 1.500h24" stroke="#5a86c8" strokeWidth="3" strokeDasharray="3 2" /></svg></PaneSplit>
          {modules.map(([name, Icon], i) => (
            <NavButton key={name} $active={i === 0}><Icon /><span dir="rtl">{name}</span></NavButton>
          ))}
          <NavOverflow>
            <svg width="12" height="18"><path d="m1 1 4 3-4 3M6 1l4 3-4 3" fill="none" stroke="#000" strokeWidth="2" /><path d="M2 12h7l-3.500 4z" fill="#000" /></svg>
          </NavOverflow>
        </Sidebar>
      </Workspace>
      <DeskBar><DeskButton>میز کار</DeskButton></DeskBar>
      <StatusBar>
        <Field $w={216}>نام کاربر :سرپرست</Field>
        <Field $w={64}>ارز پایه :</Field>
        <Field $w={59}>ریال</Field>
        <Field as="label" htmlFor="fiscal-year" $w={82}>سال مالي:</Field>
        <YearBox>
          <YearSelect id="fiscal-year" defaultValue="1403"><option>1403</option></YearSelect>
          <Caret />
        </YearBox>
        <Field $w={54}>امروز :</Field>
        <Field $w={105}>1404/02/27</Field>
        <Field $w={80}>کد مشتري:</Field>
        <Field $w={81}>1111110</Field>
        <Field $w={53}>نسخه:</Field>
        <Field $w={53}>6.0.7</Field>
        <SupportArea>
          <SupportLink href="#">پشتیباني و آموزش</SupportLink>
          <Database />
          <Bell />
        </SupportArea>
      </StatusBar>
    </Shell>
  );
}
